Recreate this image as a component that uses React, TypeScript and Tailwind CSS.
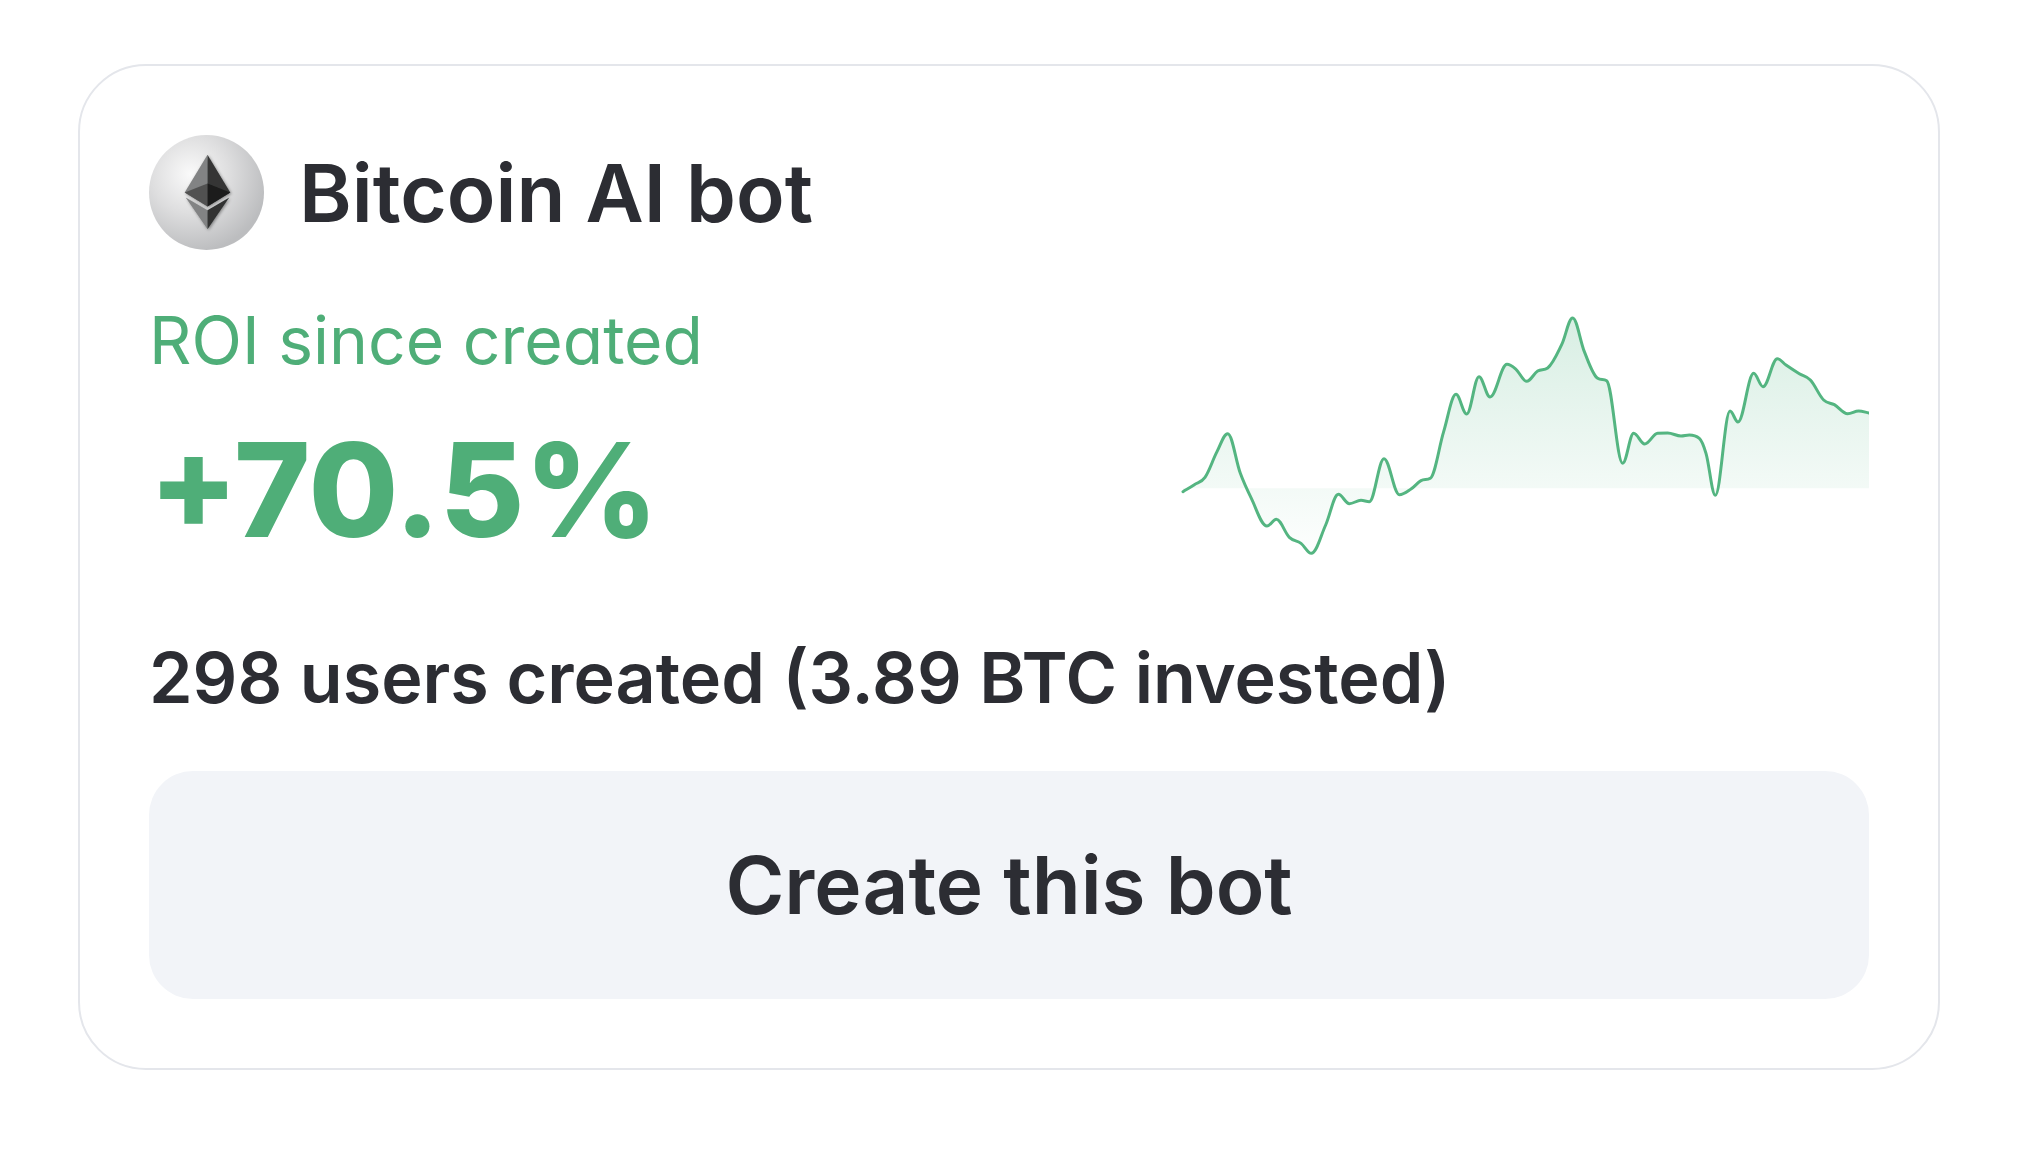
import React from "react";

type Point = [number, number];

const BASELINE = 565;

const roiHistory: Point[] = [
  [66, 575], [100, 554], [132, 532], [168, 455], [200, 401], [238, 520], [270, 593], [318, 678],
  [346, 658], [385, 712], [420, 730], [451, 760], [494, 675], [532, 583], [565, 611], [600, 601],
  [625, 605], [669, 476], [715, 584], [750, 567], [780, 542], [808, 535], [848, 395], [885, 283],
  [917, 342], [954, 230], [987, 291], [1038, 193], [1065, 208], [1097, 244], [1130, 213],
  [1160, 204], [1202, 134], [1235, 54], [1270, 155], [1310, 235], [1337, 242], [1385, 490],
  [1418, 400], [1451, 432], [1490, 400], [1520, 399], [1560, 408], [1585, 405], [1615, 415],
  [1635, 460], [1663, 586], [1707, 333], [1731, 366], [1778, 220], [1806, 260], [1849, 176],
  [1875, 195], [1915, 221], [1948, 240], [1988, 300], [2020, 314], [2060, 341], [2093, 333],
  [2124, 339],
];

// cubic interpolation, flat at every peak and trough
const buildLine = (points: Point[]) => {
  const slopes = points.slice(1).map(([x, y], i) => (y - points[i][1]) / (x - points[i][0]));
  const tangents = points.map((_, i) => {
    if (i === 0) return slopes[0];
    if (i === points.length - 1) return slopes[i - 1];
    const a = slopes[i - 1];
    const b = slopes[i];
    if (a * b <= 0) return 0;
    const limit = 2.5 * Math.min(Math.abs(a), Math.abs(b));
    return Math.sign(a) * Math.min(Math.abs(a + b) / 2, limit);
  });

  return points.slice(1).reduce((path, [x, y], i) => {
    const [px, py] = points[i];
    const dx = (x - px) * 0.36;
    return `${path}C${px + dx},${py + dx * tangents[i]} ${x - dx},${y - dx * tangents[i + 1]} ${x},${y}`;
  }, `M${points[0][0]},${points[0][1]}`);
};

const RoiChart: React.FC = () => {
  const line = buildLine(roiHistory);

  return (
    <svg viewBox="60 30 2064 750" className="w-[688px] shrink-0" role="img" aria-label="ROI chart">
      <defs>
        <linearGradient id="roi-fill" gradientUnits="userSpaceOnUse" x1="0" y1="54" x2="0" y2="760">
          <stop offset="0" stopColor="#4fb482" stopOpacity="0.22" />
          <stop offset="1" stopColor="#4fb482" stopOpacity="0.01" />
        </linearGradient>
      </defs>
      <path d={`${line}V${BASELINE}H66Z`} fill="url(#roi-fill)" />
      <path d={line} fill="none" stroke="#54b581" strokeWidth="9" strokeLinecap="round" strokeLinejoin="round" />
    </svg>
  );
};

const CoinIcon: React.FC = () => (
  <svg viewBox="0 0 116 116" className="size-[115px] shrink-0" aria-hidden="true">
    <defs>
      <radialGradient id="coin" cx="0.36" cy="0.34" r="0.68">
        <stop offset="0" stopColor="#fafafa" />
        <stop offset="0.5" stopColor="#dededf" />
        <stop offset="1" stopColor="#bcbdbf" />
      </radialGradient>
      <filter id="coin-shadow" x="-30%" y="-30%" width="160%" height="160%">
        <feDropShadow dx="1" dy="1" stdDeviation="1.5" floodColor="#000" floodOpacity="0.4" />
      </filter>
    </defs>
    <circle cx="58" cy="58" r="58" fill="url(#coin)" />
    <g filter="url(#coin-shadow)">
      <path d="M59 20 36 58 59 72Z" fill="#828384" />
      <path d="M59 20 82 58 59 72Z" fill="#343635" />
      <path d="M59 49 36 58 59 72Z" fill="#515151" />
      <path d="M59 49 82 58 59 72Z" fill="#1d1d1d" />
      <path d="M37 63 59 76V95Z" fill="#828384" />
      <path d="M81 63 59 76V95Z" fill="#303332" />
    </g>
  </svg>
);

export default function App() {
  return (
    <main className="min-h-screen bg-white pt-16 pr-24 pb-20 pl-[78px] font-['Inter',sans-serif] text-[#2c2d33]">
      <article className="rounded-[68px] border-2 border-[#e4e6eb] bg-white p-[69px]">
        <header className="flex items-center gap-[35px]">
          <CoinIcon />
          <h2 className="text-[80px] leading-[96px] font-semibold">Bitcoin AI bot</h2>
        </header>

        <div className="mt-11 flex items-start justify-between">
          <div className="text-[#4fae78] [font-feature-settings:'cv11']">
            <p className="text-[66px] leading-[92px]">ROI since created</p>
            <p className="mt-[34px] text-[130px] leading-[140px] font-extrabold">+70.5%</p>
          </div>
          <div className="mt-4">
            <RoiChart />
          </div>
        </div>

        <p className="mt-[78px] text-[70px] leading-[80px] font-semibold">
          298 users created (3.89 BTC invested)
        </p>

        <button
          type="button"
          className="mt-[53px] h-[228px] w-full rounded-[44px] bg-[#f2f4f8] text-[80px] leading-[96px] font-semibold"
        >
          Create this bot
        </button>
      </article>
    </main>
  );
}
